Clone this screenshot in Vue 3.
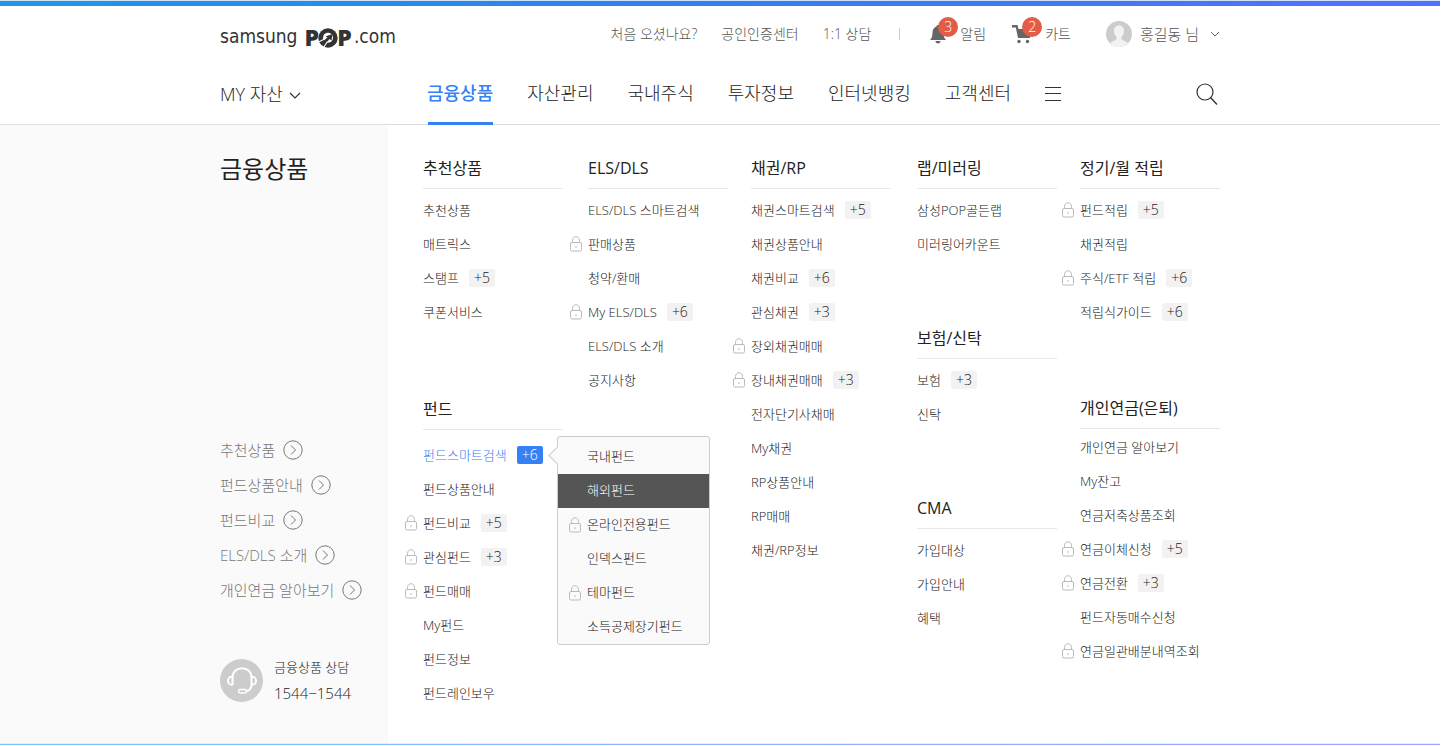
<script setup>
const utilLinks = ['처음 오셨나요?', '공인인증센터', '1:1 상담']
const navItems = ['금융상품', '자산관리', '국내주식', '투자정보', '인터넷뱅킹', '고객센터']
const quickLinks = ['추천상품', '펀드상품안내', '펀드비교', 'ELS/DLS 소개', '개인연금 알아보기']

const item = (label, count = 0, locked = false) => ({ label, count, locked })

const fundMenu = [
  item('국내펀드'),
  { ...item('해외펀드'), current: true },
  item('온라인전용펀드', 0, true),
  item('인덱스펀드'),
  item('테마펀드', 0, true),
  item('소득공제장기펀드'),
]

const columns = [
  [
    { title: '추천상품', items: [item('추천상품'), item('매트릭스'), item('스탬프', 5), item('쿠폰서비스')] },
    {
      title: '펀드',
      kind: 'fund',
      items: [
        { ...item('펀드스마트검색', 6), menu: fundMenu },
        item('펀드상품안내'),
        item('펀드비교', 5, true),
        item('관심펀드', 3, true),
        item('펀드매매', 0, true),
        item('My펀드'),
        item('펀드정보'),
        item('펀드레인보우'),
      ],
    },
  ],
  [
    {
      title: 'ELS/DLS',
      items: [
        item('ELS/DLS 스마트검색'),
        item('판매상품', 0, true),
        item('청약/환매'),
        item('My ELS/DLS', 6, true),
        item('ELS/DLS 소개'),
        item('공지사항'),
      ],
    },
  ],
  [
    {
      title: '채권/RP',
      items: [
        item('채권스마트검색', 5),
        item('채권상품안내'),
        item('채권비교', 6),
        item('관심채권', 3),
        item('장외채권매매', 0, true),
        item('장내채권매매', 3, true),
        item('전자단기사채매'),
        item('My채권'),
        item('RP상품안내'),
        item('RP매매'),
        item('채권/RP정보'),
      ],
    },
  ],
  [
    { title: '랩/미러링', items: [item('삼성POP골든랩'), item('미러링어카운트')] },
    { title: '보험/신탁', items: [item('보험', 3), item('신탁')] },
    { title: 'CMA', items: [item('가입대상'), item('가입안내'), item('혜택')] },
  ],
  [
    {
      title: '정기/월 적립',
      items: [item('펀드적립', 5, true), item('채권적립'), item('주식/ETF 적립', 6, true), item('적립식가이드', 6)],
    },
    {
      title: '개인연금(은퇴)',
      kind: 'pension',
      items: [
        item('개인연금 알아보기'),
        item('My잔고'),
        item('연금저축상품조회'),
        item('연금이체신청', 5, true),
        item('연금전환', 3, true),
        item('펀드자동매수신청'),
        item('연금일관배분내역조회', 0, true),
      ],
    },
  ],
]
</script>

<template>
  <div class="page">
    <header class="header">
      <div class="wrap util">
        <a href="#" class="logo">
          <span class="logo-thin">samsung</span>
          <span class="logo-pop">POP<svg class="logo-mark" viewBox="0 0 20 20" aria-hidden="true">
            <circle cx="10" cy="10" r="9.700" fill="#333" />
            <circle cx="10" cy="9.800" r="5" fill="#fff" />
            <path d="M14.500 6L13.500 12.500L11.500 11L6.500 17.500L3 14.500L9.500 9.500L7.500 8.500Z" fill="#333" />
            <path d="M.5 14L7.500 10.500M5.500 19.500L9.500 13.500" fill="none" stroke="#fff" stroke-width="1.200" />
          </svg></span>
          <span class="logo-thin logo-com">.com</span>
        </a>
        <nav class="util-nav">
          <a v-for="link in utilLinks" :key="link" href="#">{{ link }}</a>
          <span class="divider"></span>
          <a href="#" class="alert">
            <span class="icon-box">
              <svg width="18" height="20" viewBox="0 0 18 20" aria-hidden="true">
                <path d="M9 1C10 1 10.500 1.500 10.500 2.500C13.500 3.500 14.500 6 14.500 9C14.500 12.500 15.500 14.500 17 16H1C2.500 14.500 3.500 12.500 3.500 9C3.500 6 4.500 3.500 7.500 2.500C7.500 1.500 8 1 9 1Z" fill="#666" />
                <path d="M6.500 17H11.500C11.500 18.500 10.500 19.500 9 19.500S6.500 18.500 6.500 17Z" fill="#666" />
              </svg>
              <b class="bubble">3</b>
            </span>
            알림
          </a>
          <a href="#" class="cart">
            <span class="icon-box">
              <svg width="20" height="20" viewBox="0 0 20 20" aria-hidden="true">
                <path d="M0 1H5.500L6.500 5H19L18 14H6L3.800 3.500H0Z" fill="#666" />
                <circle cx="7" cy="17.500" r="1.700" fill="#666" />
                <circle cx="15.500" cy="17.500" r="1.700" fill="#666" />
              </svg>
              <b class="bubble">2</b>
            </span>
            카트
          </a>
          <button type="button" class="user">
            <svg width="26" height="26" viewBox="0 0 26 26" aria-hidden="true">
              <circle cx="13" cy="13" r="13" fill="#ccc" />
              <path d="M13 4.500C16.500 4.500 18 7 18 10C18 12.500 17 14.500 15.500 16V18C16 19.500 20 20 22 22.400A13 13 0 0 1 4 22.400C6 20 10 19.500 10.500 18V16C9 14.500 8 12.500 8 10C8 7 9.500 4.500 13 4.500Z" fill="#f2f2f2" />
            </svg>
            <span>홍길동 님</span>
            <svg width="10" height="6" viewBox="0 0 10 6" aria-hidden="true">
              <path d="M1 1L5 5L9 1" fill="none" stroke="#666" />
            </svg>
          </button>
        </nav>
      </div>
      <div class="wrap gnb">
        <button type="button" class="my-asset">
          <span>MY 자산</span>
          <svg width="12" height="8" viewBox="0 0 12 8" aria-hidden="true">
            <path d="M1 1L6 6L11 1" fill="none" stroke="#333" stroke-width="1.200" />
          </svg>
        </button>
        <nav class="gnb-nav">
          <a v-for="(nav, i) in navItems" :key="nav" href="#" :class="{ active: i === 0 }">{{ nav }}</a>
          <button type="button" class="all" aria-label="전체메뉴">
            <svg width="16" height="14" viewBox="0 0 16 14" aria-hidden="true">
              <path d="M0 .5H16M0 6.500H16M0 13.500H16" stroke="#333" />
            </svg>
          </button>
        </nav>
        <button type="button" class="search" aria-label="검색">
          <svg width="22" height="22" viewBox="0 0 22 22" aria-hidden="true">
            <circle cx="9" cy="9" r="8" fill="none" stroke="#333" stroke-width="1.200" />
            <path d="M14.500 14.500L21 21.500" stroke="#333" stroke-width="1.400" />
          </svg>
        </button>
      </div>
    </header>

    <div class="body">
      <aside class="side">
        <div class="side-inner">
          <h1>금융상품</h1>
          <ul class="quick">
            <li v-for="link in quickLinks" :key="link">
              <a href="#">
                {{ link }}
                <svg width="20" height="20" viewBox="0 0 20 20" aria-hidden="true">
                  <circle cx="10" cy="10" r="9.200" fill="none" stroke="#777" />
                  <path d="M8 5.500L12.500 10L8 14.500" fill="none" stroke="#777" />
                </svg>
              </a>
            </li>
          </ul>
          <div class="contact">
            <svg width="43" height="43" viewBox="0 0 43 43" aria-hidden="true">
              <circle cx="21.500" cy="21.500" r="21.500" fill="#ccc" />
              <path d="M12.500 26V18.500C12.500 6 31.500 6 31.500 18.500V26M12.500 17.500C6.500 17.500 6.500 26 12.500 26M31.500 17.500C37.500 17.500 37.500 26 31.500 26C31.500 29.500 29 32 26 32" fill="none" stroke="#fff" stroke-width="2" />
              <rect x="18.500" y="30.500" width="8" height="3.500" rx="1.700" fill="none" stroke="#fff" stroke-width="1.500" />
            </svg>
            <p>금융상품 상담<strong>1544−1544</strong></p>
          </div>
        </div>
      </aside>

      <main class="main">
        <div v-for="(groups, c) in columns" :key="c" class="column">
          <section v-for="group in groups" :key="group.title" class="group" :class="group.kind">
            <h2>{{ group.title }}</h2>
            <ul>
              <li v-for="entry in group.items" :key="entry.label" :class="{ open: entry.menu }">
                <svg v-if="entry.locked" class="lock" width="12" height="16" viewBox="0 0 12 16" aria-hidden="true">
                  <path d="M2.500 6.500V4.500C2.500 -.5 9.500 -.5 9.500 4.500V6.500" fill="none" stroke="#bbb" />
                  <rect x=".5" y="6.500" width="11" height="8.500" rx="1.500" fill="none" stroke="#bbb" />
                  <rect x="5.500" y="10" width="1" height="2" fill="#bbb" />
                </svg>
                <a href="#">{{ entry.label }}</a>
                <button v-if="entry.count" type="button" class="more">+{{ entry.count }}</button>
                <ul v-if="entry.menu" class="menu">
                  <li v-for="sub in entry.menu" :key="sub.label" :class="{ current: sub.current }">
                    <svg v-if="sub.locked" class="lock" width="12" height="16" viewBox="0 0 12 16" aria-hidden="true">
                      <path d="M2.500 6.500V4.500C2.500 -.5 9.500 -.5 9.500 4.500V6.500" fill="none" stroke="#bbb" />
                      <rect x=".5" y="6.500" width="11" height="8.500" rx="1.500" fill="none" stroke="#bbb" />
                      <rect x="5.500" y="10" width="1" height="2" fill="#bbb" />
                    </svg>
                    <a href="#">{{ sub.label }}</a>
                  </li>
                </ul>
              </li>
            </ul>
          </section>
        </div>
      </main>
    </div>
    <div class="foot-line"></div>
  </div>
</template>

<style>
body {
  background: #fff;
}
</style>

<style scoped>
.page {
  padding-right: 1px;
  font-family: 'Open Sans', 'Noto Sans CJK KR', sans-serif;
  font-weight: 300;
  font-size: 13px;
  line-height: 20px;
  color: #222;
  white-space: nowrap;
}
.page * {
  box-sizing: border-box;
}
a {
  color: inherit;
  text-decoration: none;
}
button {
  padding: 0;
  border: 0;
  background: none;
  font: inherit;
  color: inherit;
  cursor: pointer;
}
ul {
  list-style: none;
  margin: 0;
  padding: 0;
}
svg {
  display: block;
  flex: none;
}
.wrap {
  width: 1000px;
  margin: 0 auto;
  display: flex;
  align-items: center;
}
.header {
  border-bottom: 1px solid #ddd;
}
.header::before {
  content: '';
  display: block;
  height: 6px;
  box-sizing: border-box;
  border-top: 1px solid #cfe3f5;
  background: linear-gradient(90deg, #1f97e8, #3080f2 45%, #5370fd) padding-box;
}
.util {
  height: 58px;
  padding-bottom: 2px;
  justify-content: space-between;
}
.logo {
  display: flex;
  align-items: flex-start;
  padding-top: 5px;
  color: #333;
}
.logo-thin {
  font: 400 19px/24px 'DejaVu Sans Condensed', 'DejaVu Sans', sans-serif;
}
.logo-pop {
  position: relative;
  margin-left: 7px;
  font: 800 23px/26px 'Open Sans', sans-serif;
}
.logo-mark {
  position: absolute;
  left: 14px;
  top: 4px;
  width: 20px;
  height: 20px;
}
.logo-com {
  margin-left: 2px;
}
.util-nav {
  display: flex;
  align-items: center;
  font-size: 14px;
  color: #555;
  gap: 24px;
}
.divider {
  width: 1px;
  height: 12px;
  margin: 0 5px 0 4px;
  background: #ccc;
}
.alert,
.cart {
  display: flex;
  align-items: center;
  gap: 13px;
}
.alert {
  margin-right: 2px;
}
.icon-box {
  position: relative;
}
.bubble {
  position: absolute;
  left: 50%;
  top: -7px;
  width: 20px;
  height: 20px;
  border-radius: 10px;
  background: #e25c48;
  color: #fff;
  font-size: 14px;
  line-height: 20px;
  font-weight: 300;
  text-align: center;
}
.user {
  display: flex;
  align-items: center;
  gap: 8px;
  margin-left: 11px;
  font-size: 15px;
}
.user span {
  margin-right: 3px;
}
.gnb {
  height: 60px;
  font-size: 18px;
}
.my-asset {
  display: flex;
  align-items: center;
  gap: 6px;
  width: 207px;
}
.my-asset svg {
  margin-top: 4px;
}
.gnb-nav {
  display: flex;
  align-items: center;
  gap: 34px;
}
.gnb-nav a {
  padding-bottom: 2px;
  line-height: 58px;
  position: relative;
}
.gnb-nav .active {
  color: #3580f5;
  font-weight: 500;
}
.gnb-nav .active::after {
  content: '';
  position: absolute;
  left: 1px;
  right: 0;
  bottom: -1px;
  height: 3px;
  background: #3580f5;
}
.search {
  margin-left: auto;
  margin-right: 2px;
}
.body {
  display: grid;
  grid-template-columns: calc(50% - 332px) 1fr;
}
.side {
  background: #fafafa;
  display: flex;
  justify-content: flex-end;
}
.side-inner {
  width: 168px;
  padding: 26px 0 37px;
  display: flex;
  flex-direction: column;
}
h1 {
  margin: 0;
  font-size: 24px;
  line-height: 36px;
  font-weight: 400;
}
.quick {
  margin-top: auto;
  font-size: 15px;
  color: #777;
}
.quick a {
  display: flex;
  align-items: center;
  gap: 8px;
  height: 35px;
}
.contact {
  display: flex;
  align-items: center;
  gap: 11px;
  margin-top: 47px;
}
.contact p {
  margin: 0;
  line-height: 26px;
}
.contact strong {
  display: block;
  font-size: 15px;
  font-weight: 300;
}
.main {
  display: grid;
  grid-template-columns: 165px 163px 166px 163px 140px;
  padding: 27px 0 33px 35px;
}
.group {
  width: 140px;
}
.group + .group {
  margin-top: 61px;
}
.group + .fund {
  margin-top: 64px;
}
.group + .pension {
  margin-top: 63px;
}
h2 {
  margin: 0 0 4px;
  padding-bottom: 4px;
  border-bottom: 1px solid #e8e8e8;
  font-size: 16px;
  line-height: 32px;
  font-weight: 400;
}
.fund h2 {
  margin-bottom: 8px;
}
.pension h2 {
  margin-bottom: 1px;
}
.group li {
  position: relative;
  display: flex;
  align-items: center;
  gap: 10px;
  height: 34px;
}
.lock {
  position: absolute;
  left: -18px;
  top: 9px;
}
.more {
  width: 26px;
  height: 18px;
  border-radius: 2px;
  background: #f2f2f2;
  font-size: 14px;
  line-height: 18px;
  text-align: center;
}
.open > a {
  color: #3580f5;
}
.open > .more {
  background: #3580f5;
  color: #fff;
}
.menu {
  position: absolute;
  left: 134px;
  top: -2px;
  z-index: 1;
  width: 153px;
  padding-top: 3px;
  border: 1px solid #ccc;
  border-radius: 3px;
  background: #fafafa;
}
.menu::before {
  content: '';
  position: absolute;
  left: -7px;
  top: 12px;
  width: 12px;
  height: 12px;
  border: solid #ccc;
  border-width: 0 0 1px 1px;
  background: #fafafa;
  transform: rotate(45deg);
}
.menu li {
  padding: 0 0 2px 29px;
}
.menu .lock {
  left: 11px;
}
.menu .current {
  background: #555;
  color: #fff;
}
.foot-line {
  height: 2px;
  border-top: 1px solid #e5effc;
  background: linear-gradient(90deg, #7cc4f5, #8bb6f8 45%, #9aa8fb) padding-box;
}
</style>
